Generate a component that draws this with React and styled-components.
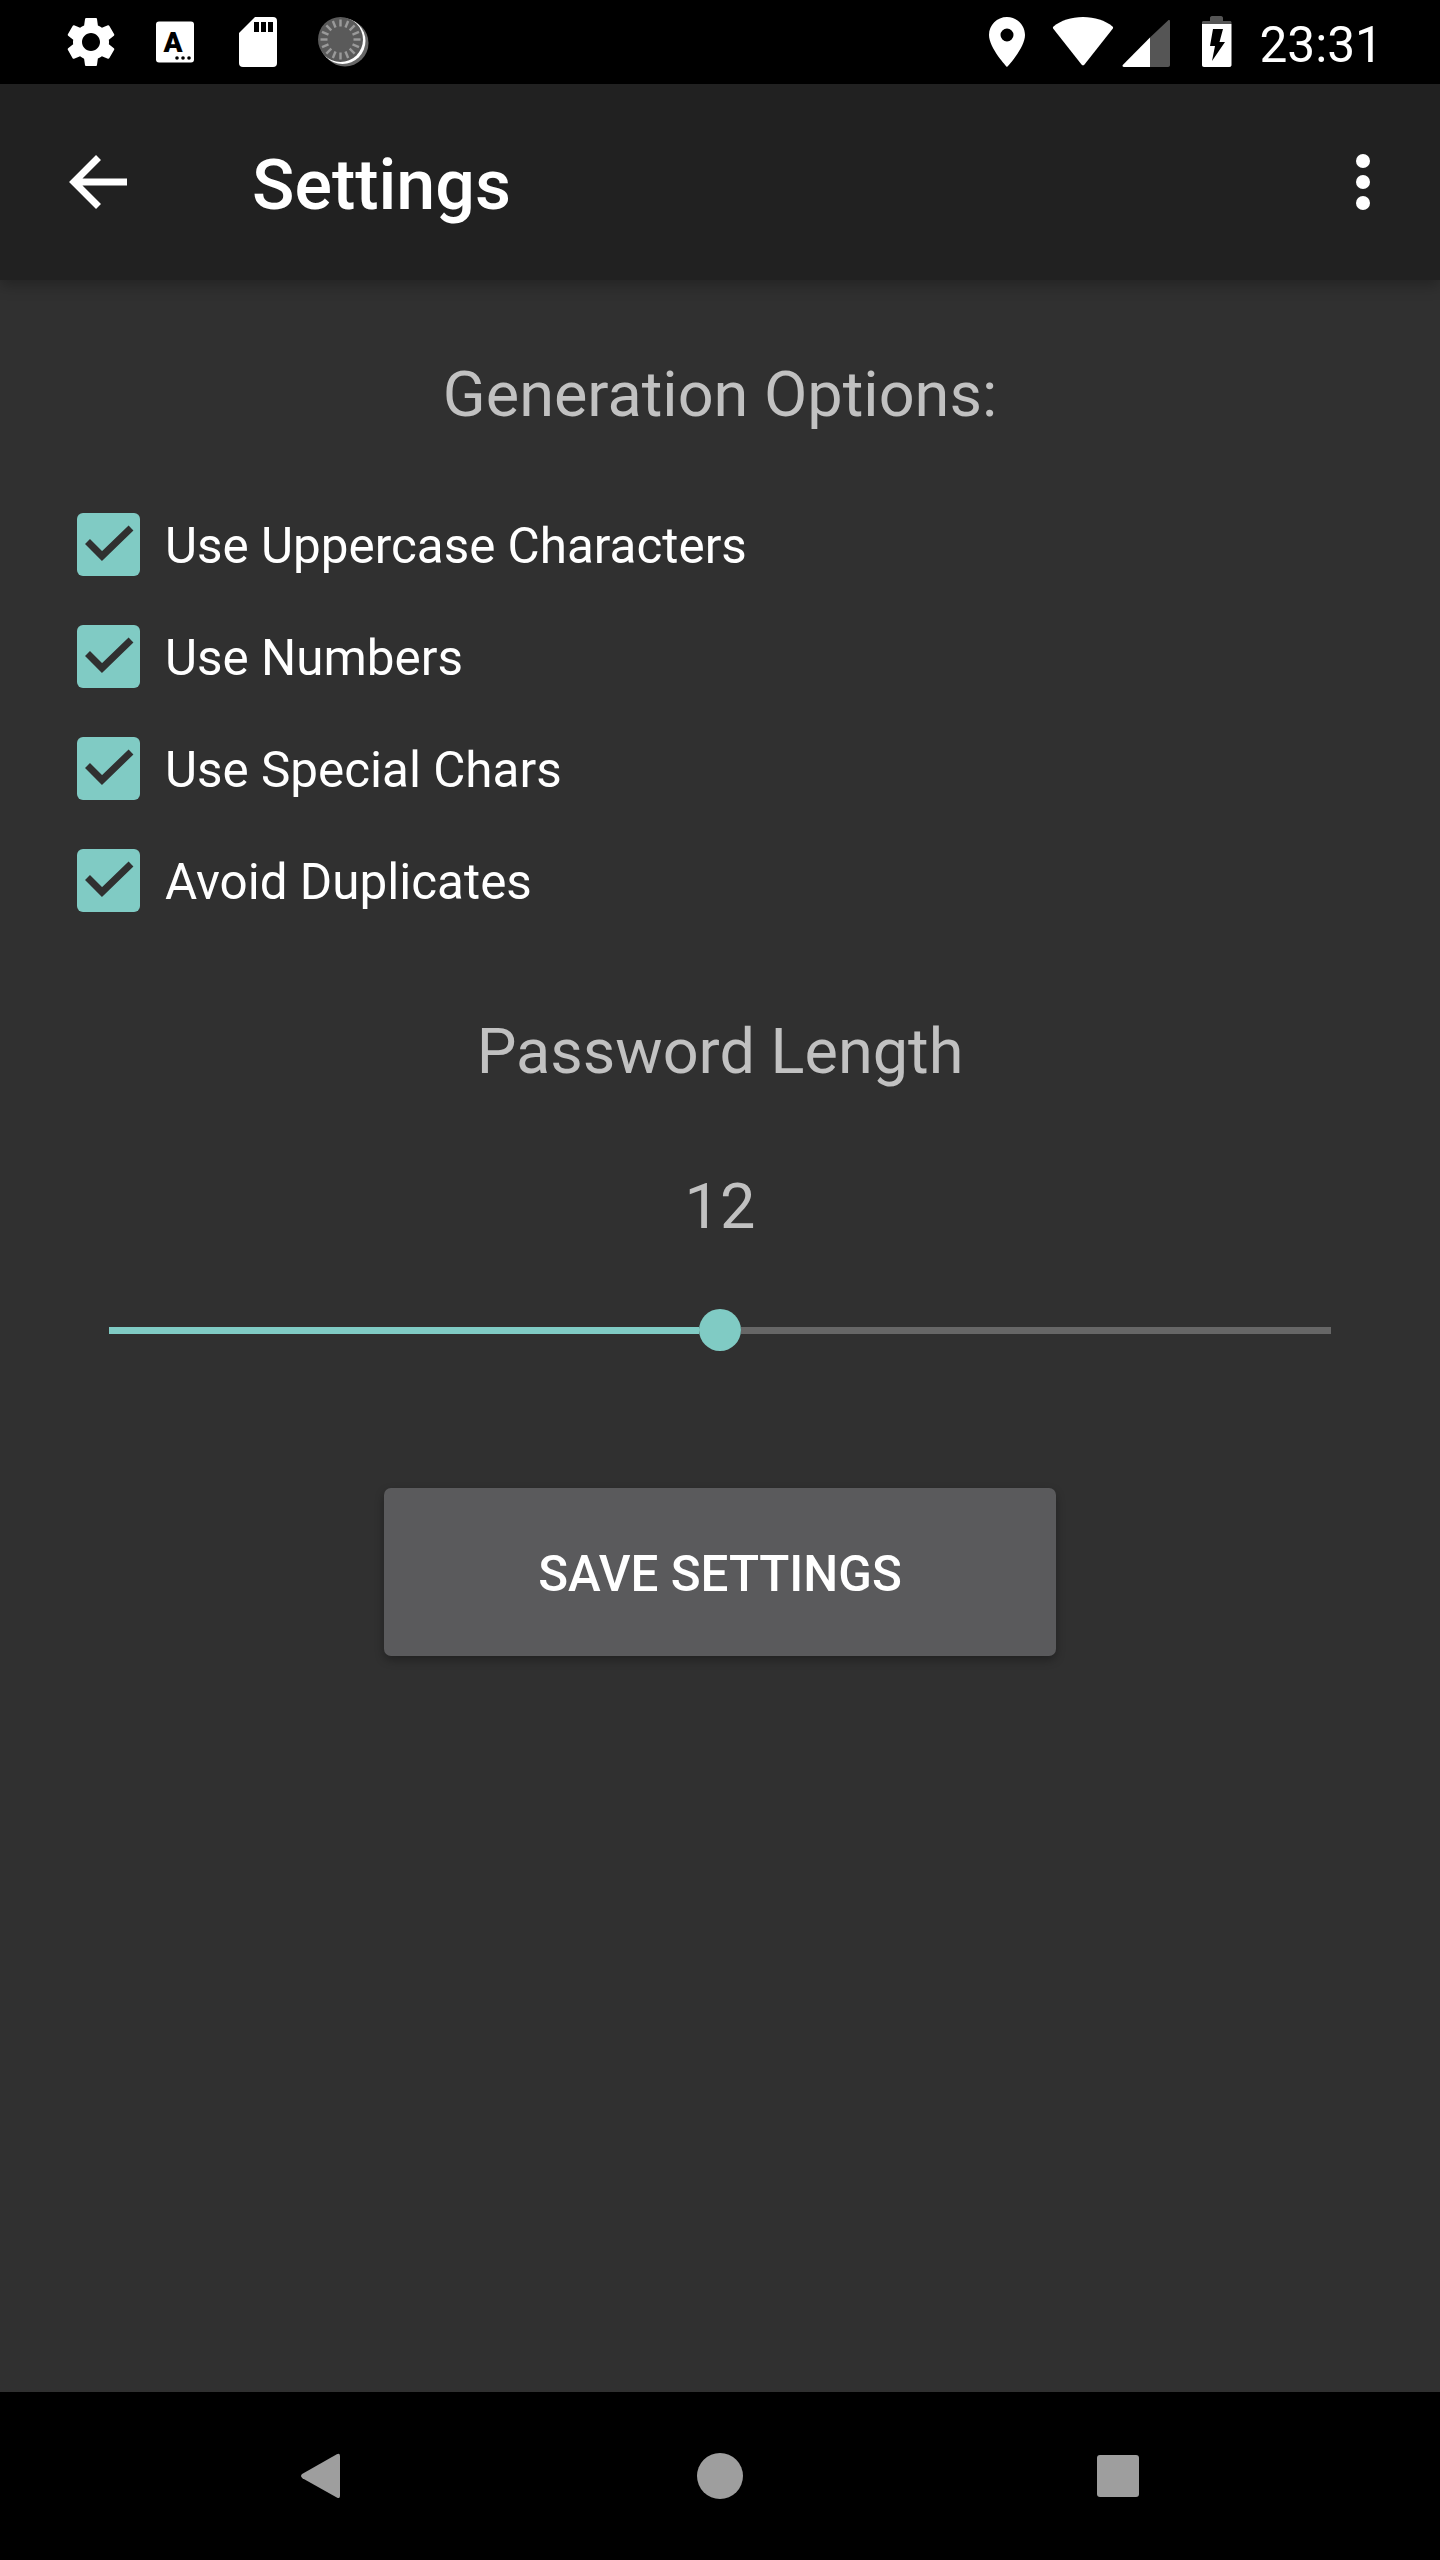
import React from 'react';
import styled, { createGlobalStyle } from 'styled-components';

const GlobalStyle = createGlobalStyle`
  html, body {
    margin: 0;
    padding: 0;
    background: #303030;
  }
  * {
    box-sizing: border-box;
  }
`;

const Screen = styled.div`
  width: 1440px;
  height: 2560px;
  display: flex;
  flex-direction: column;
  background: #303030;
  font-family: Roboto, "Liberation Sans", sans-serif;
  overflow: hidden;
`;

const StatusBar = styled.div`
  height: 84px;
  flex: none;
  display: flex;
  align-items: center;
  justify-content: space-between;
  background: #000;
  padding: 0 57px 0 49px;
`;

const StatusGroup = styled.div`
  display: flex;
  align-items: center;
`;

const StatusIcon = styled.svg`
  display: block;
  flex: none;
  height: 84px;
  width: ${(p) => p.$w || 84}px;
`;

const Clock = styled.div`
  margin-left: 7px;
  padding-top: 3px;
  color: #fff;
  font-size: 49.6px;
  line-height: 84px;
  height: 84px;
`;

const AppBar = styled.div`
  position: relative;
  z-index: 1;
  height: 196px;
  flex: none;
  display: flex;
  align-items: center;
  background: #212121;
  box-shadow: 0 5px 14px rgba(0, 0, 0, 0.28);
  padding: 0 49px;
`;

const BackIcon = styled.svg`
  display: block;
  flex: none;
  width: 84px;
  height: 84px;
`;

const Title = styled.div`
  margin-left: 119px;
  padding-top: 5px;
  flex: 1;
  color: #fff;
  font-size: 70px;
  font-weight: 500;
  line-height: 84px;
`;

const MenuIcon = styled.svg`
  display: block;
  flex: none;
  width: 84px;
  height: 84px;
  margin-right: -14px;
`;

const Content = styled.div`
  flex: 1;
  display: flex;
  flex-direction: column;
  padding-top: 80px;
`;

const Heading = styled.div`
  color: #c1c1c1;
  font-size: 63px;
  line-height: 70px;
  text-align: center;
  margin-top: ${(p) => p.$top || 0}px;
`;

const OptionList = styled.div`
  display: flex;
  flex-direction: column;
  margin-top: 58px;
  padding-left: 77px;
`;

const OptionRow = styled.div`
  display: flex;
  align-items: center;
  height: 112px;
  color: #fff;
  font-size: 49.4px;
`;

const OptionLabel = styled.span`
  padding-top: 3px;
`;

const CheckBox = styled.div`
  width: 63px;
  height: 63px;
  flex: none;
  margin-right: 25px;
  border-radius: 6px;
  background: #80cbc4;
`;

const CheckMark = styled.svg`
  display: block;
  width: 63px;
  height: 63px;
`;

const Slider = styled.div`
  display: flex;
  align-items: center;
  height: 42px;
  margin: 67px 109px 0 109px;
`;

const Track = styled.div`
  flex: 1;
  height: 7px;
  background: ${(p) => p.$color};
`;

const Thumb = styled.div`
  width: 42px;
  height: 42px;
  flex: none;
  border-radius: 50%;
  background: #80cbc4;
`;

const SaveButton = styled.button`
  display: block;
  width: 672px;
  height: 168px;
  margin: 137px auto 0;
  padding: 4px 0 0;
  border: 0;
  border-radius: 7px;
  background: #5a5a5c;
  box-shadow: 0 4px 10px rgba(0, 0, 0, 0.3);
  color: #fff;
  font-family: inherit;
  font-size: 49.3px;
  font-weight: 500;
`;

const NavBar = styled.div`
  height: 168px;
  flex: none;
  display: flex;
  align-items: center;
  justify-content: center;
  gap: 316px;
  background: #000;
`;

const NavIcon = styled.svg`
  display: block;
  flex: none;
  width: 84px;
  height: 84px;
  fill: #9e9e9e;
`;

const options = ['Use Uppercase Characters', 'Use Numbers', 'Use Special Chars', 'Avoid Duplicates'];

const gearPath =
  'M19.14 12.94c.04-.3.06-.61.06-.94 0-.32-.02-.64-.07-.94l2.03-1.58c.18-.14.23-.41.12-.61l-1.92-3.32c-.12-.22-.37-.29-.59-.22l-2.39.96c-.5-.38-1.03-.7-1.62-.94l-.36-2.54c-.04-.24-.24-.41-.48-.41h-3.84c-.24 0-.43.17-.47.41l-.36 2.54c-.59.24-1.13.57-1.62.94l-2.39-.96c-.22-.08-.47 0-.59.22L2.74 8.87c-.12.21-.08.47.12.61l2.03 1.58c-.05.3-.09.63-.09.94s.02.64.07.94l-2.03 1.58c-.18.14-.23.41-.12.61l1.92 3.32c.12.22.37.29.59.22l2.39-.96c.5.38 1.03.7 1.62.94l.36 2.54c.05.24.24.41.48.41h3.84c.24 0 .44-.17.47-.41l.36-2.54c.59-.24 1.13-.56 1.62-.94l2.39.96c.22.08.47 0 .59-.22l1.92-3.32c.12-.22.07-.47-.12-.61l-2.01-1.58zM12 15.6c-1.98 0-3.6-1.62-3.6-3.6s1.62-3.6 3.6-3.6 3.6 1.62 3.6 3.6-1.62 3.6-3.6 3.6z';

// spinner ticks round the grey disc
const ticks = Array.from({ length: 16 }, (_, i) => i * 22.5);

function App() {
  return (
    <Screen>
      <GlobalStyle />
      <StatusBar>
        <StatusGroup>
          <StatusIcon viewBox="0 0 84 84">
            <path d={gearPath} fill="#fff" transform="translate(12 12) scale(2.5)" />
          </StatusIcon>
          <StatusIcon viewBox="0 0 84 84">
            <rect x="23" y="21.5" width="38" height="41" rx="3" fill="#fff" />
            <text x="40" y="52" fontFamily="Roboto, sans-serif" fontSize="28" fontWeight="900" textAnchor="middle" fill="#000">A</text>
            <circle cx="44" cy="58" r="1.8" fill="#000" />
            <circle cx="50" cy="58" r="1.8" fill="#000" />
            <circle cx="56" cy="58" r="1.8" fill="#000" />
          </StatusIcon>
          <StatusIcon viewBox="0 0 84 84">
            <path d="M38 17h18a4 4 0 0 1 4 4v42a4 4 0 0 1-4 4H26a4 4 0 0 1-4-4V33z" fill="#fff" />
            <rect x="37" y="22" width="5" height="10" fill="#000" />
            <rect x="44" y="22" width="5" height="10" fill="#000" />
            <rect x="51" y="22" width="5" height="10" fill="#000" />
          </StatusIcon>
          <StatusIcon viewBox="0 0 84 84">
            <circle cx="44" cy="43" r="23.5" fill="#666" />
            <circle cx="41.5" cy="41" r="23" fill="#fff" />
            <circle cx="39.5" cy="39.5" r="22.5" fill="#5a5a5a" />
            {ticks.map((deg) => (
              <rect key={deg} x="38.3" y="19.5" width="2.4" height="7" fill="#9a9a9a" transform={`rotate(${deg} 39.5 39.5)`} />
            ))}
          </StatusIcon>
        </StatusGroup>
        <StatusGroup>
          <StatusIcon $w={76} viewBox="0 0 76 84">
            <path fillRule="evenodd" d="M38 17c-10 0-18 8-18 18 0 13 18 32 18 32s18-19 18-32c0-10-8-18-18-18zm0 24.5a6.5 6.5 0 1 1 0-13 6.5 6.5 0 0 1 0 13z" fill="#fff" />
          </StatusIcon>
          <StatusIcon $w={76} viewBox="0 0 76 84">
            <path d="M38 17c12 0 22 3.5 29.5 9.5.7.6.8 1.5.2 2.3L39.5 64.5a2 2 0 0 1-3 0L8.3 28.8c-.6-.8-.5-1.7.2-2.3C16 20.5 26 17 38 17z" fill="#fff" />
          </StatusIcon>
          <StatusIcon $w={60} viewBox="0 0 60 84">
            <path d="M29 67H3c-1.5 0-2-1-1-2.200L29 37.500z" fill="#fff" />
            <path d="M29 37.500L47 20.500c1-.8 2-.4 2 1V65c0 1.200-.8 2-2 2H29z" fill="#555" />
          </StatusIcon>
          <StatusIcon $w={71} viewBox="0 0 71 84">
            <path d="M29 21v-3c0-1 .7-2 2-2h9c1.3 0 2 1 2 2v3h7c1 0 1.5.7 1.5 1.5V24H21v-1.5c0-.8.5-1.5 1.5-1.5z" fill="#555" />
            <path d="M21 24h29.5v41c0 1.200-.8 2-2 2H23c-1.200 0-2-.8-2-2z" fill="#fff" />
            <path d="M32 29h10l-3.5 13H44L31 61l3-15h-5z" fill="#000" />
          </StatusIcon>
          <Clock>23:31</Clock>
        </StatusGroup>
      </StatusBar>

      <AppBar>
        <BackIcon viewBox="0 0 84 84">
          <path d="M78 42H28M49.5 17.5L25 42l24.5 24.5" fill="none" stroke="#fff" strokeWidth="7" />
        </BackIcon>
        <Title>Settings</Title>
        <MenuIcon viewBox="0 0 84 84">
          <circle cx="42" cy="21" r="7" fill="#fff" />
          <circle cx="42" cy="42" r="7" fill="#fff" />
          <circle cx="42" cy="63" r="7" fill="#fff" />
        </MenuIcon>
      </AppBar>

      <Content>
        <Heading>Generation Options:</Heading>
        <OptionList>
          {options.map((label) => (
            <OptionRow key={label}>
              <CheckBox>
                <CheckMark viewBox="0 0 63 63">
                  <path d="M10.5 28.5L25 43L54 15" fill="none" stroke="#303030" strokeWidth="7" />
                </CheckMark>
              </CheckBox>
              <OptionLabel>{label}</OptionLabel>
            </OptionRow>
          ))}
        </OptionList>
        <Heading $top={81}>Password Length</Heading>
        <Heading $top={85}>12</Heading>
        <Slider>
          <Track $color="#80cbc4" />
          <Thumb />
          <Track $color="#666" />
        </Slider>
        <SaveButton>SAVE SETTINGS</SaveButton>
      </Content>

      <NavBar>
        <NavIcon viewBox="0 0 84 84">
          <path d="M24.5 39.8L58.8 20.2Q62 18.8 62 22V62Q62 65.2 58.8 63.5L24.5 44.2Q21.5 42 24.5 39.8z" />
        </NavIcon>
        <NavIcon viewBox="0 0 84 84">
          <circle cx="42" cy="42" r="23" />
        </NavIcon>
        <NavIcon viewBox="0 0 84 84">
          <rect x="19" y="21" width="42" height="42" rx="3" />
        </NavIcon>
      </NavBar>
    </Screen>
  );
}

export default App;
